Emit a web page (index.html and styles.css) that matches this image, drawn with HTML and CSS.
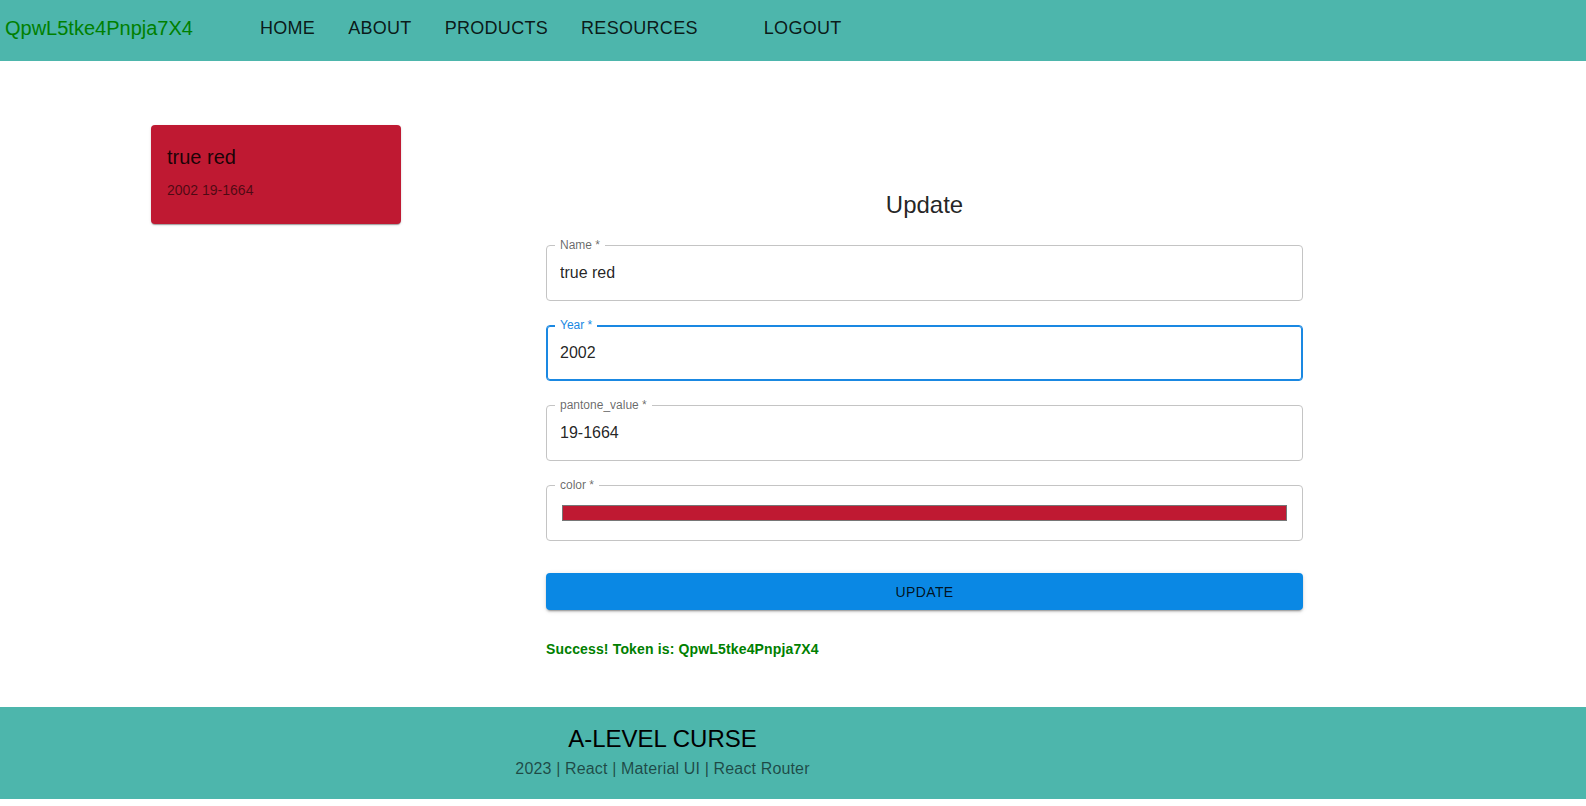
FILE: index.html
```html
<!DOCTYPE html>
<html lang="en">
<head>
<meta charset="utf-8">
<title>Update</title>
<link rel="stylesheet" href="styles.css">
</head>
<body>
<header class="topbar">
  <div class="logo">QpwL5tke4Pnpja7X4</div>
  <nav class="nav">
    <a class="nav-link" href="#">HOME</a>
    <a class="nav-link" href="#">ABOUT</a>
    <a class="nav-link" href="#">PRODUCTS</a>
    <a class="nav-link" href="#">RESOURCES</a>
    <a class="nav-link nav-logout" href="#">LOGOUT</a>
  </nav>
</header>

<main class="main">
  <aside class="side">
    <div class="color-card">
      <div class="card-title">true red</div>
      <div class="card-sub">2002 19-1664</div>
    </div>
  </aside>

  <section class="form-col">
    <h2 class="form-title">Update</h2>

    <div class="field">
      <span class="field-label">Name *</span>
      <input class="field-input" type="text" value="true red">
    </div>

    <div class="field field-focused">
      <span class="field-label">Year *</span>
      <input class="field-input" type="text" value="2002">
    </div>

    <div class="field">
      <span class="field-label">pantone_value *</span>
      <input class="field-input" type="text" value="19-1664">
    </div>

    <div class="field field-color">
      <span class="field-label">color *</span>
      <div class="swatch"></div>
    </div>

    <button class="update-btn" type="button">UPDATE</button>

    <p class="success">Success! Token is: QpwL5tke4Pnpja7X4</p>
  </section>
</main>

<footer class="footer">
  <div class="footer-inner">
    <div class="footer-title">A-LEVEL CURSE</div>
    <div class="footer-sub">2023 | React | Material UI | React Router</div>
  </div>
</footer>
</body>
</html>
```

FILE: styles.css
```css
* {
  box-sizing: border-box;
}

html, body {
  margin: 0;
  padding: 0;
  background: #ffffff;
}

body {
  font-family: "Liberation Sans", Arial, sans-serif;
  color: rgba(0, 0, 0, 0.87);
  padding-bottom: 7px;
}

/* Header */
.topbar {
  height: 61px;
  background: #4db6ac;
  display: flex;
  align-items: center;
  padding: 0 0 5px 5px;
}

.logo {
  font-size: 20px;
  color: #008000;
  line-height: 24px;
}

.nav {
  display: flex;
  align-items: center;
  gap: 33px;
  margin-left: 67px;
}

.nav-link {
  font-size: 18px;
  line-height: 24px;
  color: rgba(0, 0, 0, 0.87);
  text-decoration: none;
  letter-spacing: 0.3px;
}

.nav-logout {
  margin-left: 33px;
}

/* Main */
.main {
  min-height: 646px;
  display: flex;
  align-items: flex-start;
  padding: 64px 0 0 151px;
}

.side {
  width: 250px;
  flex: none;
}

.color-card {
  background: #bf1932;
  border-radius: 4px;
  padding: 16px 16px 24px;
  box-shadow: 0px 2px 1px -1px rgba(0,0,0,0.2), 0px 1px 1px 0px rgba(0,0,0,0.14), 0px 1px 3px 0px rgba(0,0,0,0.12);
}

.card-title {
  font-size: 20px;
  line-height: 32px;
  color: rgba(0, 0, 0, 0.87);
  margin-bottom: 7px;
}

.card-sub {
  font-size: 14px;
  line-height: 20px;
  color: rgba(0, 0, 0, 0.6);
}

.form-col {
  width: 757px;
  flex: none;
  margin-left: 145px;
  padding-top: 64px;
  display: flex;
  flex-direction: column;
}

.form-title {
  margin: 0;
  font-size: 24px;
  font-weight: 400;
  line-height: 32px;
  text-align: center;
  color: rgba(0, 0, 0, 0.87);
}

.field {
  position: relative;
  height: 56px;
  border: 1px solid #c4c4c4;
  border-radius: 4px;
  margin-top: 24px;
  display: flex;
  align-items: center;
}

.field-label {
  position: absolute;
  left: 8px;
  top: -8px;
  padding: 0 5px;
  background: #ffffff;
  font-size: 12px;
  line-height: 14px;
  color: rgba(0, 0, 0, 0.6);
}

.field-focused {
  border-color: #1a88e2;
  box-shadow: inset 0 0 0 1px #1a88e2;
}

.field-focused .field-label {
  color: #1a88e2;
}

.field-input {
  width: 100%;
  height: 100%;
  border: none;
  outline: none;
  background: transparent;
  padding: 0 13px;
  font-family: "Liberation Sans", Arial, sans-serif;
  font-size: 16px;
  color: rgba(0, 0, 0, 0.87);
}

.field-color {
  padding: 0 15px;
}

.swatch {
  width: 100%;
  height: 16px;
  background: #bf1932;
  border: 1px solid #767676;
}

.update-btn {
  margin-top: 32px;
  height: 37px;
  width: 100%;
  border: none;
  border-radius: 4px;
  background: #0a88e4;
  color: rgba(0, 0, 0, 0.87);
  font-family: "Liberation Sans", Arial, sans-serif;
  font-size: 14px;
  letter-spacing: 0.4px;
  text-transform: uppercase;
  box-shadow: 0px 3px 1px -2px rgba(0,0,0,0.2), 0px 2px 2px 0px rgba(0,0,0,0.14), 0px 1px 5px 0px rgba(0,0,0,0.12);
  cursor: pointer;
}

.success {
  margin: 29px 0 0;
  font-size: 14px;
  line-height: 20px;
  font-weight: 700;
  letter-spacing: 0.15px;
  color: #008000;
}

/* Footer */
.footer {
  background: #4db6ac;
  height: 92px;
  padding: 16px 0 0;
}

.footer-inner {
  width: 1325px;
  text-align: center;
}

.footer-title {
  font-size: 24px;
  line-height: 32px;
  color: #000000;
}

.footer-sub {
  margin-top: 2px;
  font-size: 16px;
  line-height: 24px;
  letter-spacing: 0.15px;
  color: rgba(0, 0, 0, 0.6);
}
```
